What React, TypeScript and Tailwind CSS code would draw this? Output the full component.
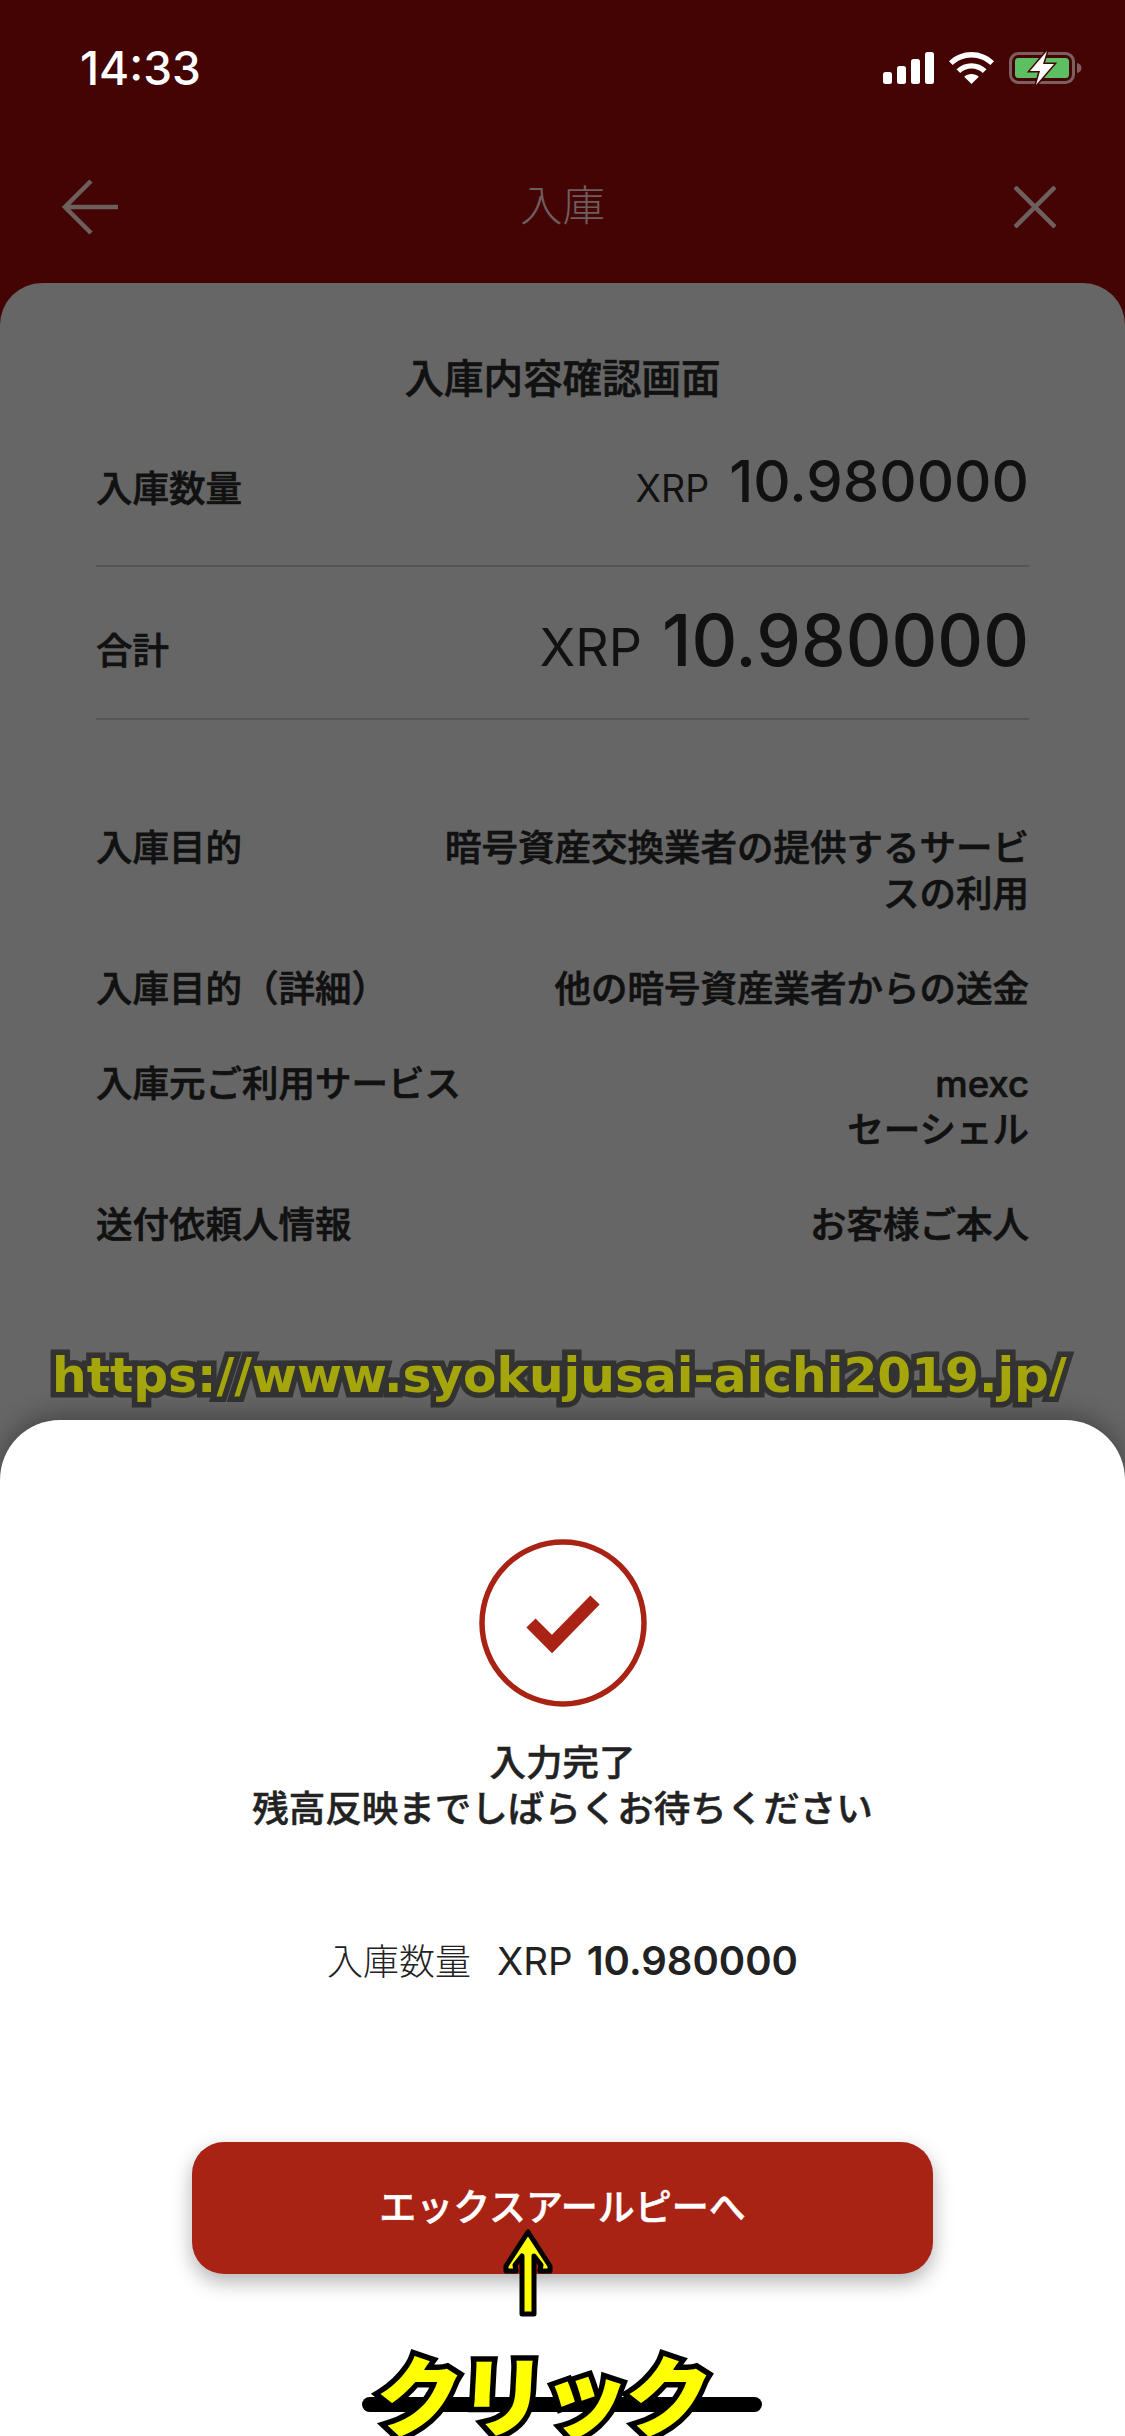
import React from "react";

const sans = "font-['Inter','Noto_Sans_CJK_JP',sans-serif]";

const rows = [
    { label: "入庫目的", value: ["暗号資産交換業者の提供するサービ", "スの利用"] },
    { label: "入庫目的（詳細）", value: ["他の暗号資産業者からの送金"] },
    { label: "入庫元ご利用サービス", value: ["mexc", "セーシェル"] },
    { label: "送付依頼人情報", value: ["お客様ご本人"] },
];

function StatusIcons() {
    return (
        <div className="flex items-center gap-[15px]">
            <svg width="51" height="32" viewBox="0 0 51 32" fill="#fff">
                <rect x="0" y="20" width="9" height="12" rx="2.5" />
                <rect x="14" y="14" width="9" height="18" rx="2.5" />
                <rect x="28" y="7" width="9" height="25" rx="2.5" />
                <rect x="42" y="0" width="9" height="32" rx="2.5" />
            </svg>
            <svg width="45" height="32" viewBox="0 0 45 32" fill="#fff">
                <path d="M22.5 0C31 0 39 3.4 45 9.2l-3.6 3.9C36.300 8.200 29.600 5.400 22.500 5.400S8.700 8.200 3.600 13.100L0 9.200C6 3.400 14 0 22.500 0z" />
                <path d="M22.500 11.200c5.600 0 10.900 2.200 15 6l-3.700 3.900c-3-2.800-7.100-4.500-11.300-4.500s-8.300 1.700-11.300 4.500l-3.700-3.900c4.100-3.800 9.400-6 15-6z" />
                <path d="M22.500 22c2.700 0 5.300 1 7.300 2.800L22.500 32l-7.300-7.200c2-1.800 4.600-2.800 7.300-2.800z" />
            </svg>
            <svg width="73" height="36" viewBox="0 0 73 36">
                <rect x="1.500" y="3.500" width="63" height="29" rx="8" fill="none" stroke="#7d5f5f" strokeWidth="3" />
                <rect x="6" y="8" width="54" height="20" rx="3.500" fill="#5cc062" />
                <path d="M68 13c3 .5 4.500 2.500 4.500 5s-1.500 4.500-4.500 5z" fill="#7d5f5f" />
                <path d="M38 1 21 21h10l-4 14 18-21H34z" fill="#fff" stroke="#440404" strokeWidth="3" paintOrder="stroke" />
            </svg>
        </div>
    );
}

export default function App() {
    return (
        <div className={`${sans} relative w-[1125px] h-[2436px] overflow-hidden bg-[#440404] flex flex-col`}>
            {/* status bar */}
            <div className="h-[136px] pl-[80px] pr-[43px] flex justify-between items-center">
                <span className="text-[46px] leading-none font-medium text-white">14:33</span>
                <StatusIcons />
            </div>

            {/* header */}
            <div className="h-[147px] pb-[6px] pl-[62px] pr-[62px] flex items-center justify-between">
                <div className="w-[56px] flex">
                    <svg width="56" height="56" viewBox="0 0 56 56" fill="none" stroke="#6e5f5f" strokeWidth="4.500">
                        <path d="M56 28H4M29 2 3 28l26 26" />
                    </svg>
                </div>
                <span className="text-[42.500px] leading-none font-light text-[#6e5f5f]">入庫</span>
                <div className="w-[56px] pl-[7px] flex">
                    <svg width="42" height="42" viewBox="0 0 42 42" fill="none" stroke="#6e5f5f" strokeWidth="4.500">
                        <path d="M1 1l40 40M41 1 1 41" />
                    </svg>
                </div>
            </div>

            {/* dimmed confirmation card */}
            <div className="flex-1 rounded-t-[42px] bg-[#666666] px-[96px] pt-[71px] text-[#111111]">
                <h1 className="text-center text-[39.500px] leading-[50px] font-medium [-webkit-text-stroke:0.7px_#111111]">入庫内容確認画面</h1>

                <div className="h-[163px] border-b-2 border-[#555555] flex items-start justify-between pt-[37px]">
                    <span className="text-[36.500px] leading-[46px] font-medium [-webkit-text-stroke:0.7px_#111111] mt-[25px]">入庫数量</span>
                    <span className="flex items-baseline gap-[20px] leading-[80px]">
                        <span className="text-[37.500px]">XRP</span>
                        <span className="text-[58px] font-medium">10.980000</span>
                    </span>
                </div>

                <div className="h-[153px] border-b-2 border-[#555555] flex items-start justify-between pt-[26px]">
                    <span className="text-[36.500px] leading-[46px] font-medium [-webkit-text-stroke:0.7px_#111111] mt-[35px]">合計</span>
                    <span className="flex items-baseline gap-[20px] leading-[94px]">
                        <span className="text-[52px]">XRP</span>
                        <span className="text-[71px] font-medium">10.980000</span>
                    </span>
                </div>

                <div className="mt-[105px] flex flex-col gap-[49px] text-[36.500px] leading-[46px] font-medium [-webkit-text-stroke:0.7px_#111111]">
                    {rows.map((row) => (
                        <div key={row.label} className="flex justify-between">
                            <span>{row.label}</span>
                            <span className="text-right">
                                {row.value.map((line) => (
                                    <div key={line}>{line}</div>
                                ))}
                            </span>
                        </div>
                    ))}
                </div>
            </div>

            {/* watermark over the card */}
            <div className="absolute left-[52px] top-[1340px] font-['DejaVu_Sans',sans-serif] font-bold text-[48.700px] leading-[70px] whitespace-nowrap text-[#a5a50c] [-webkit-text-stroke:11px_#333333] [paint-order:stroke_fill]">
                https://www.syokujusai-aichi2019.jp/
            </div>

            {/* bottom sheet */}
            <div className="absolute inset-x-0 top-[1420px] bottom-0 rounded-t-[60px] bg-white shadow-[0_-6px_24px_rgba(0,0,0,0.3)] pt-[119px] flex flex-col items-center text-[#222222]">
                <svg width="168" height="168" viewBox="0 0 168 168" fill="none" stroke="#a92315">
                    <circle cx="84" cy="84" r="81" strokeWidth="5.500" />
                    <path d="M52 84l21 21 43-44" strokeWidth="13" />
                </svg>
                <p className="mt-[33px] text-center text-[36.500px] leading-[46px] font-medium [-webkit-text-stroke:0.5px_#222222]">
                    入力完了
                    <br />
                    残高反映までしばらくお待ちください
                </p>
                <div className="mt-[106px] flex items-baseline text-[36px] leading-[46px]">
                    <span className="font-light">入庫数量</span>
                    <span className="ml-[26px] text-[38.500px]">XRP</span>
                    <span className="ml-[14px] text-[40px] font-semibold">10.980000</span>
                </div>
                <button className="mt-[157px] w-[741px] h-[132px] rounded-[32px] bg-[#a92315] text-white text-[37px] font-medium [-webkit-text-stroke:0.5px_#ffffff] shadow-[0_8px_20px_rgba(0,0,0,0.3)]">
                    エックスアールピーへ
                </button>
            </div>

            {/* click annotation */}
            <svg className="absolute left-[500px] top-[2228px]" width="56" height="92" viewBox="0 0 56 92">
                <path d="M28 4 6 38v5h10l-1-6 7-9v58h12V28l7 9-1 6h10v-5z" fill="#ffff00" stroke="#000" strokeWidth="5" strokeLinejoin="round" />
            </svg>
            <div className="absolute left-[362px] top-[2397px] w-[400px] h-[15px] rounded-full bg-black" />
            <div className="absolute left-[376px] top-[2350px] font-['Noto_Sans_CJK_JP',sans-serif] font-black text-[88px] leading-[84px] tracking-[-5px] whitespace-nowrap text-[#ffff00] [-webkit-text-stroke:11px_#000000] [paint-order:stroke_fill] -skew-x-3">
                クリック
            </div>
        </div>
    );
}
